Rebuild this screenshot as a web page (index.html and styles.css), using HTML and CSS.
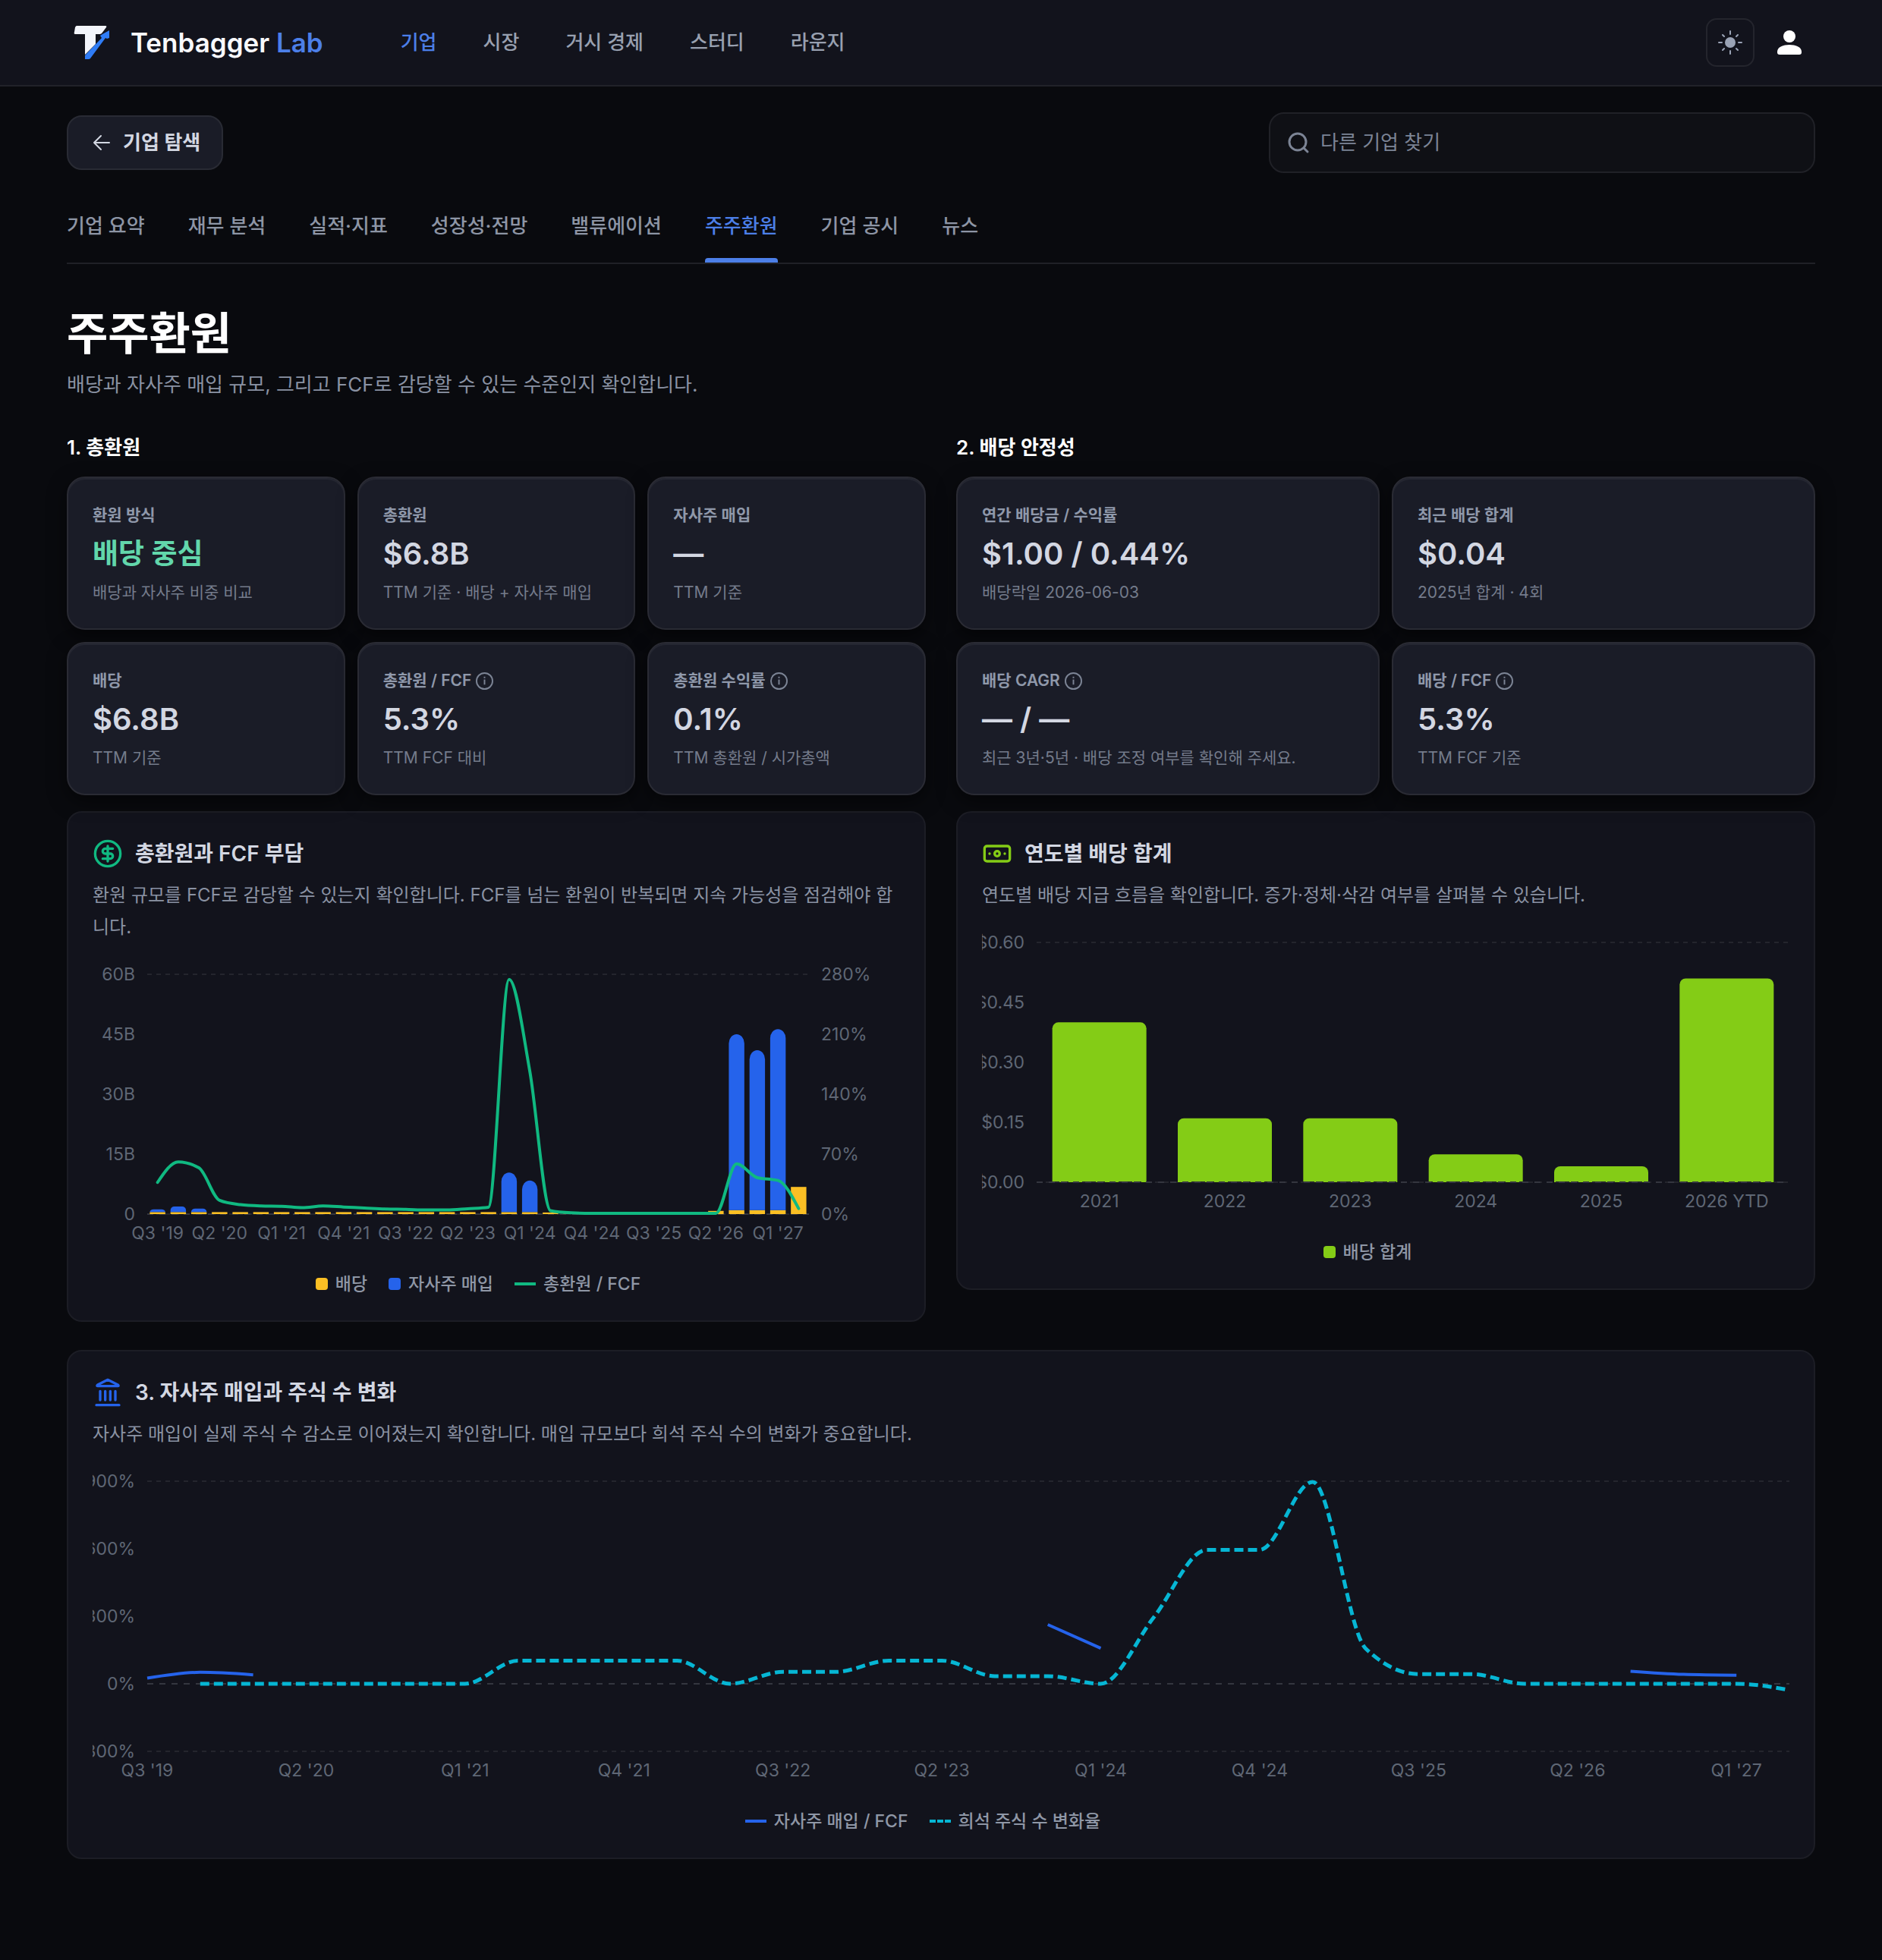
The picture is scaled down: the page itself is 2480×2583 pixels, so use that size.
FILE: index.html
```html
<!DOCTYPE html>
<html lang="ko">
<head>
    <meta charset="UTF-8">
    <meta name="viewport" content="width=device-width, initial-scale=1.0">
    <title>주주환원 - Tenbagger Lab</title>
    <link rel="stylesheet" href="styles.css">
</head>
<body>
    <header class="site-header">
        <a href="#" class="brand">
            <svg class="logo" viewBox="0 0 48 48">
                <path d="M5 2h38q2 0 1 2l-6 8-2 1h-6v13L16 40V13H3q-2 0-1-3l1-6q1-2 2-2z" fill="#f3f5fb"/>
                <path d="M48 8v10l-3 1-2-1-20 27q-1 1-2 1h-5v-5l22-23-2-3 3-2z" fill="#2f7cf6"/>
            </svg>
            <span>Tenbagger <span class="brand-accent">Lab</span></span>
        </a>
        <nav class="main-nav">
            <a href="#" class="active">기업</a>
            <a href="#">시장</a>
            <a href="#">거시 경제</a>
            <a href="#">스터디</a>
            <a href="#">라운지</a>
        </nav>
        <div class="header-actions">
            <button type="button" class="theme-btn" aria-label="테마 변경">
                <svg width="32" height="32" viewBox="0 0 32 32" fill="#9aa3b5" stroke="#9aa3b5" stroke-width="2" stroke-linecap="round">
                    <circle cx="16" cy="16" r="6"/>
                    <path d="M16 1v4M16 27v4M1 16h4M27 16h4M6 6l2 2M24 24l2 2M6 26l2-2M24 8l2-2"/>
                </svg>
            </button>
            <button type="button" class="user-btn" aria-label="내 계정">
                <svg width="32" height="32" viewBox="0 0 32 32" fill="#ffffff">
                    <circle cx="16" cy="8" r="8"/>
                    <path d="M0 28c0-6 8-9 16-9s16 3 16 9v1q0 3-3 3H3q-3 0-3-3z"/>
                </svg>
            </button>
        </div>
    </header>

    <main>
        <div class="toolbar">
            <button type="button" class="back-btn">
                <svg width="24" height="24" viewBox="0 0 24 24" fill="none" stroke="currentColor" stroke-width="2" stroke-linecap="round" stroke-linejoin="round">
                    <path d="M22 12H2M11 3l-9 9 9 9"/>
                </svg>
                기업 탐색
            </button>
            <label class="search">
                <svg width="30" height="30" viewBox="0 0 30 30" fill="none" stroke="currentColor" stroke-width="3" stroke-linecap="round">
                    <circle cx="14" cy="14" r="11"/>
                    <path d="M22 22l5 5"/>
                </svg>
                <input type="text" placeholder="다른 기업 찾기" aria-label="다른 기업 찾기">
            </label>
        </div>

        <nav class="tabs">
            <a href="#">기업 요약</a>
            <a href="#">재무 분석</a>
            <a href="#">실적·지표</a>
            <a href="#">성장성·전망</a>
            <a href="#">밸류에이션</a>
            <a href="#" class="active">주주환원</a>
            <a href="#">기업 공시</a>
            <a href="#">뉴스</a>
        </nav>

        <h1>주주환원</h1>
        <p class="lead">배당과 자사주 매입 규모, 그리고 FCF로 감당할 수 있는 수준인지 확인합니다.</p>

        <div class="columns">
            <section>
                <h2>1. 총환원</h2>
                <div class="cards three">
                    <div class="card">
                        <div class="label">환원 방식</div>
                        <div class="value korean">배당 중심</div>
                        <div class="note">배당과 자사주 비중 비교</div>
                    </div>
                    <div class="card">
                        <div class="label">총환원</div>
                        <div class="value">$6.8B</div>
                        <div class="note">TTM 기준 · 배당 + 자사주 매입</div>
                    </div>
                    <div class="card">
                        <div class="label">자사주 매입</div>
                        <div class="value">—</div>
                        <div class="note">TTM 기준</div>
                    </div>
                    <div class="card">
                        <div class="label">배당</div>
                        <div class="value">$6.8B</div>
                        <div class="note">TTM 기준</div>
                    </div>
                    <div class="card">
                        <div class="label">총환원 / FCF <svg class="info" viewBox="0 0 24 24"><circle cx="12" cy="12" r="11"/><path d="M12 10v7M12 6v2"/></svg></div>
                        <div class="value">5.3%</div>
                        <div class="note">TTM FCF 대비</div>
                    </div>
                    <div class="card">
                        <div class="label">총환원 수익률 <svg class="info" viewBox="0 0 24 24"><circle cx="12" cy="12" r="11"/><path d="M12 10v7M12 6v2"/></svg></div>
                        <div class="value">0.1%</div>
                        <div class="note">TTM 총환원 / 시가총액</div>
                    </div>
                </div>
                <div class="panel">
                    <h3>
                        <svg class="icon green" viewBox="0 0 24 24"><circle cx="12" cy="12" r="10"/><path d="M16 8h-6a2 2 0 1 0 0 4h4a2 2 0 1 1 0 4H8M12 18V6"/></svg>
                        총환원과 FCF 부담
                    </h3>
                    <p class="desc">환원 규모를 FCF로 감당할 수 있는지 확인합니다. FCF를 넘는 환원이 반복되면 지속 가능성을 점검해야 합니다.</p>
                    <svg class="chart" id="fcf-chart"></svg>
                    <div class="legend">
                        <span><i class="box yellow"></i>배당</span>
                        <span><i class="box blue"></i>자사주 매입</span>
                        <span><i class="line green"></i>총환원 / FCF</span>
                    </div>
                </div>
            </section>

            <section>
                <h2>2. 배당 안정성</h2>
                <div class="cards two">
                    <div class="card">
                        <div class="label">연간 배당금 / 수익률</div>
                        <div class="value">$1.00 / 0.44%</div>
                        <div class="note">배당락일 2026-06-03</div>
                    </div>
                    <div class="card">
                        <div class="label">최근 배당 합계</div>
                        <div class="value">$0.04</div>
                        <div class="note">2025년 합계 · 4회</div>
                    </div>
                    <div class="card">
                        <div class="label">배당 CAGR <svg class="info" viewBox="0 0 24 24"><circle cx="12" cy="12" r="11"/><path d="M12 10v7M12 6v2"/></svg></div>
                        <div class="value">— / —</div>
                        <div class="note">최근 3년·5년 · 배당 조정 여부를 확인해 주세요.</div>
                    </div>
                    <div class="card">
                        <div class="label">배당 / FCF <svg class="info" viewBox="0 0 24 24"><circle cx="12" cy="12" r="11"/><path d="M12 10v7M12 6v2"/></svg></div>
                        <div class="value">5.3%</div>
                        <div class="note">TTM FCF 기준</div>
                    </div>
                </div>
                <div class="panel">
                    <h3>
                        <svg class="icon lime" viewBox="0 0 24 24"><rect x="2" y="6" width="20" height="12" rx="2"/><circle cx="12" cy="12" r="2"/><path d="M6 12h.01M18 12h.01"/></svg>
                        연도별 배당 합계
                    </h3>
                    <p class="desc">연도별 배당 지급 흐름을 확인합니다. 증가·정체·삭감 여부를 살펴볼 수 있습니다.</p>
                    <svg class="chart" id="dividend-chart"></svg>
                    <div class="legend">
                        <span><i class="box lime"></i>배당 합계</span>
                    </div>
                </div>
            </section>
        </div>

        <section class="panel wide">
            <h3>
                <svg class="icon blue" viewBox="0 0 24 24"><path d="M3 22h18M6 18v-7M10 18v-7M14 18v-7M18 18v-7M12 2l8 4q1 1 0 1H4q-1 0 0-1z"/></svg>
                3. 자사주 매입과 주식 수 변화
            </h3>
            <p class="desc">자사주 매입이 실제 주식 수 감소로 이어졌는지 확인합니다. 매입 규모보다 희석 주식 수의 변화가 중요합니다.</p>
            <svg class="chart tall" id="shares-chart"></svg>
            <div class="legend">
                <span><i class="line blue"></i>자사주 매입 / FCF</span>
                <span><i class="line dashed"></i>희석 주식 수 변화율</span>
            </div>
        </section>
    </main>

    <script src="script.js"></script>
</body>
</html>
```
FILE: styles.css
```css
* {
    box-sizing: border-box;
}
body {
    margin: 0;
    min-height: 100vh;
    background: #090a0e;
    color: #d3d7e2;
    font-family: Inter, "Noto Sans CJK KR", sans-serif;
    font-size: 26px;
    line-height: 40px;
}
a {
    color: inherit;
    text-decoration: none;
}
button {
    font: inherit;
    cursor: pointer;
}

/* Header */
.site-header {
    display: flex;
    align-items: center;
    height: 114px;
    padding: 0 90px 0 96px;
    background: #12131c;
    border-bottom: 2px solid #212229;
}
.brand {
    display: flex;
    align-items: center;
    gap: 28px;
    color: #f8f9fc;
    font-size: 35px;
    font-weight: 600;
    white-space: nowrap;
}
.logo {
    width: 48px;
    height: 48px;
}
.brand-accent {
    color: #4c7fe8;
}
.main-nav {
    display: flex;
    gap: 61px;
    margin-left: 102px;
    color: #98a0b0;
    font-weight: 500;
}
.main-nav .active {
    color: #4c7fe8;
}
.header-actions {
    display: flex;
    gap: 14px;
    margin-left: auto;
}
.theme-btn,
.user-btn {
    display: flex;
    align-items: center;
    justify-content: center;
    width: 64px;
    height: 64px;
    padding: 0;
    border: 2px solid transparent;
    border-radius: 14px;
    background: none;
}
.theme-btn {
    border-color: #24252d;
}

/* Toolbar */
main {
    padding: 34px 88px 80px;
}
.toolbar {
    display: flex;
    align-items: center;
    justify-content: space-between;
}
.back-btn {
    display: flex;
    align-items: center;
    gap: 16px;
    height: 72px;
    padding: 0 28px 0 32px;
    border: 2px solid #292b34;
    border-radius: 20px;
    background: #1a1c27;
    color: #d3d7e2;
    font-weight: 600;
}
.search {
    display: flex;
    align-items: center;
    gap: 12px;
    width: 720px;
    height: 80px;
    padding: 0 22px;
    border: 2px solid #202127;
    border-radius: 20px;
    background: #0f1015;
    color: #7c8495;
}
.search input {
    flex: 1;
    border: none;
    outline: none;
    background: none;
    color: #d3d7e2;
    font: inherit;
}
.search input::placeholder {
    color: #7c8495;
}

/* Tabs */
.tabs {
    display: flex;
    gap: 57px;
    margin-top: 36px;
    border-bottom: 2px solid #202127;
    color: #8d95a5;
    font-weight: 500;
    line-height: 68px;
}
.tabs a {
    position: relative;
    height: 82px;
}
.tabs .active {
    color: #4c7fe8;
}
.tabs .active::after {
    content: "";
    position: absolute;
    left: 0;
    right: 0;
    bottom: 0;
    height: 6px;
    border-radius: 4px 4px 0 0;
    background: #4c7fe8;
}

h1 {
    margin: 54px 0 0;
    color: #ffffff;
    font-size: 59px;
    font-weight: 700;
    line-height: 76px;
}
.lead {
    margin: 9px 0 0;
    color: #8a92a3;
}
.columns {
    display: grid;
    grid-template-columns: 1fr 1fr;
    align-items: start;
    gap: 40px;
    margin-top: 43px;
}
h2 {
    margin: 0 0 18px;
    color: #ffffff;
    font-size: 26px;
    font-weight: 600;
}

/* Cards */
.cards {
    display: grid;
    gap: 16px;
}
.three {
    grid-template-columns: repeat(3, 1fr);
}
.two {
    grid-template-columns: repeat(2, 1fr);
}
.card {
    height: 202px;
    padding: 32px;
    border: 2px solid #2a2b34;
    border-radius: 24px;
    background: #1a1c27;
    box-shadow: inset 0 2px 0 rgba(255, 255, 255, 0.05), 0 8px 24px rgba(0, 0, 0, 0.5);
}
.label {
    display: flex;
    align-items: center;
    gap: 6px;
    color: #8f98aa;
    font-size: 21px;
    font-weight: 600;
    line-height: 34px;
}
.info {
    width: 23px;
    height: 23px;
    fill: none;
    stroke: #7c8495;
    stroke-width: 2;
}
.value {
    margin: 8px 0;
    font-size: 40px;
    font-weight: 600;
    line-height: 52px;
}
.korean {
    color: #62d6ab;
    font-size: 37px;
}
.note {
    color: #747b8b;
    font-size: 21px;
    line-height: 34px;
}

/* Chart panels */
.panel {
    margin-top: 21px;
    padding: 34px 32px 32px;
    border: 2px solid #1c1d25;
    border-radius: 20px;
    background: #12131c;
}
.wide {
    margin-top: 37px;
}
h3 {
    display: flex;
    align-items: center;
    gap: 16px;
    margin: 0 0 14px;
    font-size: 28px;
    font-weight: 600;
    line-height: 40px;
}
.icon {
    width: 40px;
    height: 40px;
    fill: none;
    stroke-width: 2;
    stroke-linecap: round;
    stroke-linejoin: round;
}
.icon.green {
    stroke: #10b981;
}
.icon.lime {
    stroke: #84cc16;
}
.icon.blue {
    stroke: #2563eb;
}
.desc {
    margin: 0 0 16px;
    color: #8a92a3;
    font-size: 24px;
    line-height: 42px;
}
.chart {
    display: block;
    width: 100%;
    height: 397px;
}
.tall {
    height: 437px;
}
.chart text {
    fill: #5f6775;
    font-size: 23px;
}
.grid {
    stroke: #24252d;
    stroke-width: 2;
    stroke-dasharray: 6 6;
}
.zero {
    stroke: #34363f;
    stroke-width: 2;
    stroke-dasharray: 8 8;
}
.curve {
    fill: none;
    stroke-width: 4;
}
.curve.dashes {
    stroke-width: 5;
    stroke-dasharray: 12 6;
}
.legend {
    display: flex;
    justify-content: center;
    gap: 28px;
    margin-top: 20px;
    padding-right: 48px;
    color: #8f97a6;
    font-size: 23px;
    font-weight: 500;
    line-height: 32px;
}
.legend span {
    display: flex;
    align-items: center;
    gap: 10px;
}
.box {
    width: 16px;
    height: 16px;
    border-radius: 4px;
}
.box.yellow {
    background: #fbbf24;
}
.box.blue {
    background: #2563eb;
}
.box.lime {
    background: #84cc16;
}
.line {
    width: 28px;
    border-top: 4px solid #10b981;
}
.line.blue {
    border-color: #2563eb;
}
.line.dashed {
    height: 4px;
    border: none;
    background: repeating-linear-gradient(90deg, #06b6d4 0 8px, transparent 8px 10px);
}
```
FILE: script.js
```js
const TOP = 25;
const LEFT = 72;
const quarterLabels = ["Q3 '19", "Q2 '20", "Q1 '21", "Q4 '21", "Q3 '22", "Q2 '23", "Q1 '24", "Q4 '24", "Q3 '25", "Q2 '26", "Q1 '27"];

// Quarterly data, 32 quarters from Q3 '19
const dividends = [0.5, 0.5, 0.5, 0.5, 0.5, 0.5, 0.5, 0.5, 0.5, 0.5, 0.5, 0.5, 0.5, 0.5, 0.5, 0.5, 0.5, 0.5, 0.5, 0.4, 0.1, 0.1, 0.1, 0.1, 0.1, 0.1, 0.1, 0.8, 1, 1, 1, 6.8];
const buybacks = { 0: 0.7, 1: 1.4, 2: 0.9, 17: 9.9, 18: 7.9, 28: 44, 29: 40, 30: 45.3 };
const returnToFcf = [37, 61, 54, 16, 11, 9.5, 9.1, 7.5, 9.5, 8.3, 7.1, 5.9, 5.5, 4.8, 4.8, 6.3, 8, 274, 167, 4, 1.5, 0.9, 0.9, 0.9, 0.9, 0.9, 0.9, 0.9, 58.7, 42.5, 39.3, 6.5];
const shareChange = [null, 0, 0, 0, 0, 0, 0, 103, 103, 103, 103, 0, 53, 53, 103, 103, 34, 34, 0, 295, 595, 595, 897, 157, 43, 43, 0, 0, 0, 0, 0, -28];
const yearly = { "2021": 0.4, "2022": 0.16, "2023": 0.16, "2024": 0.07, "2025": 0.04, "2026 YTD": 0.51 };

function add(svg, tag, attrs, text) {
    const el = document.createElementNS("http://www.w3.org/2000/svg", tag);
    for (const key in attrs) {
        el.setAttribute(key, attrs[key]);
    }
    if (text !== undefined) {
        el.textContent = text;
    }
    svg.appendChild(el);
}

function drawLabel(svg, x, y, text, anchor) {
    add(svg, "text", { x: x, y: y + 8, "text-anchor": anchor }, text);
}

function drawGrid(svg, x1, x2, y, name) {
    add(svg, "line", { x1: x1, x2: x2, y1: y, y2: y, class: name });
}

// Bar with rounded top corners
function drawBar(svg, x, y, w, h, r, color) {
    const rx = Math.min(r, w / 2);
    const ry = Math.min(r, h);
    add(svg, "path", {
        d: `M${x} ${y + h}V${y + ry}A${rx} ${ry} 0 0 1 ${x + rx} ${y}H${x + w - rx}A${rx} ${ry} 0 0 1 ${x + w} ${y + ry}V${y + h}Z`,
        fill: color
    });
}

// Smooth monotone curve through the points
function curvePath(points) {
    const n = points.length;
    const slopes = [];
    for (let i = 0; i < n - 1; i++) {
        slopes.push((points[i + 1][1] - points[i][1]) / (points[i + 1][0] - points[i][0]));
    }
    const tangents = points.map((p, i) => {
        if (i === 0 || i === n - 1) return null;
        const a = slopes[i - 1];
        const b = slopes[i];
        if (a * b <= 0) return 0;
        return Math.sign(a) * Math.min(Math.abs(a), Math.abs(b), Math.abs(a + b) / 4) * 2;
    });
    tangents[0] = n > 2 ? (3 * slopes[0] - tangents[1]) / 2 : slopes[0];
    tangents[n - 1] = n > 2 ? (3 * slopes[n - 2] - tangents[n - 2]) / 2 : slopes[0];

    let d = `M${points[0][0]} ${points[0][1]}`;
    for (let i = 0; i < n - 1; i++) {
        const dx = (points[i + 1][0] - points[i][0]) / 3;
        d += `C${points[i][0] + dx} ${points[i][1] + dx * tangents[i]} ${points[i + 1][0] - dx} ${points[i + 1][1] - dx * tangents[i + 1]} ${points[i + 1][0]} ${points[i + 1][1]}`;
    }
    return d;
}

function drawFcfChart() {
    const svg = document.getElementById("fcf-chart");
    svg.innerHTML = "";
    const height = 316;
    const right = svg.clientWidth - 120;
    const bottom = TOP + height;
    const step = (right - LEFT) / 32;
    const barWidth = step * 0.75;
    ["60B", "45B", "30B", "15B", "0"].forEach((t, i) => drawLabel(svg, LEFT - 16, TOP + i * height / 4, t, "end"));
    ["280%", "210%", "140%", "70%", "0%"].forEach((t, i) => drawLabel(svg, right + 16, TOP + i * height / 4, t, "start"));
    drawGrid(svg, LEFT, right, TOP, "grid");
    drawGrid(svg, LEFT, right, bottom, "grid");
    drawGrid(svg, LEFT, right, bottom, "zero");

    dividends.forEach((value, i) => {
        const x = LEFT + i * step + (step - barWidth) / 2;
        const h = value / 60 * height;
        drawBar(svg, x, bottom - h, barWidth, h, 0, "#fbbf24");
        if (buybacks[i]) {
            const b = buybacks[i] / 60 * height;
            drawBar(svg, x, bottom - h - b, barWidth, b, b > 12 ? 12 : 5, "#2563eb");
        }
    });
    const points = returnToFcf.map((v, i) => [LEFT + (i + 0.5) * step, bottom - v / 280 * height]);
    add(svg, "path", { d: curvePath(points), class: "curve", stroke: "#10b981", "stroke-linecap": "round" });
    quarterLabels.forEach((t, i) => drawLabel(svg, LEFT + (i * 3 + 0.5) * step, bottom + 25, t, "middle"));
}

function drawDividendChart() {
    const svg = document.getElementById("dividend-chart");
    svg.innerHTML = "";
    const height = 316;
    const right = svg.clientWidth;
    const bottom = TOP + height;
    const step = (right - LEFT) / 6;
    ["$0.60", "$0.45", "$0.30", "$0.15", "$0.00"].forEach((t, i) => drawLabel(svg, LEFT - 16, TOP + i * height / 4, t, "end"));
    drawGrid(svg, LEFT, right, TOP, "grid");
    Object.keys(yearly).sort().forEach((year, i) => {
        const h = yearly[year] / 0.6 * height;
        drawBar(svg, LEFT + (i + 0.125) * step, bottom - h, step * 0.75, h, 8, "#84cc16");
        drawLabel(svg, LEFT + (i + 0.5) * step, bottom + 25, year, "middle");
    });
    drawGrid(svg, LEFT, right, bottom, "grid");
    drawGrid(svg, LEFT, right, bottom, "zero");
}

function drawSharesChart() {
    const svg = document.getElementById("shares-chart");
    svg.innerHTML = "";
    const height = 356;
    const right = svg.clientWidth;
    const step = (right - LEFT) / 31;
    const toPoint = (i, v) => [LEFT + i * step, TOP + (900 - v) / 1200 * height];
    ["900%", "600%", "300%", "0%", "-300%"].forEach((t, i) => drawLabel(svg, LEFT - 16, TOP + i * height / 4, t, "end"));
    drawGrid(svg, LEFT, right, TOP, "grid");
    drawGrid(svg, LEFT, right, TOP + height * 0.75, "zero");
    drawGrid(svg, LEFT, right, TOP + height, "grid");

    // Buybacks only exist for some quarters
    [[0, 25, 51, 40], [17, 263, 158], [28, 56, 42, 38]].forEach(part => {
        const points = part.slice(1).map((v, i) => toPoint(part[0] + i, v));
        add(svg, "path", { d: curvePath(points), class: "curve", stroke: "#2563eb" });
    });
    const points = shareChange.slice(1).map((v, i) => toPoint(i + 1, v));
    add(svg, "path", { d: curvePath(points), class: "curve dashes", stroke: "#06b6d4" });
    quarterLabels.forEach((t, i) => drawLabel(svg, LEFT + i * 3 * step, TOP + height + 25, t, "middle"));
}

function drawAll() {
    drawFcfChart();
    drawDividendChart();
    drawSharesChart();
}

drawAll();
window.addEventListener("resize", drawAll);
```
